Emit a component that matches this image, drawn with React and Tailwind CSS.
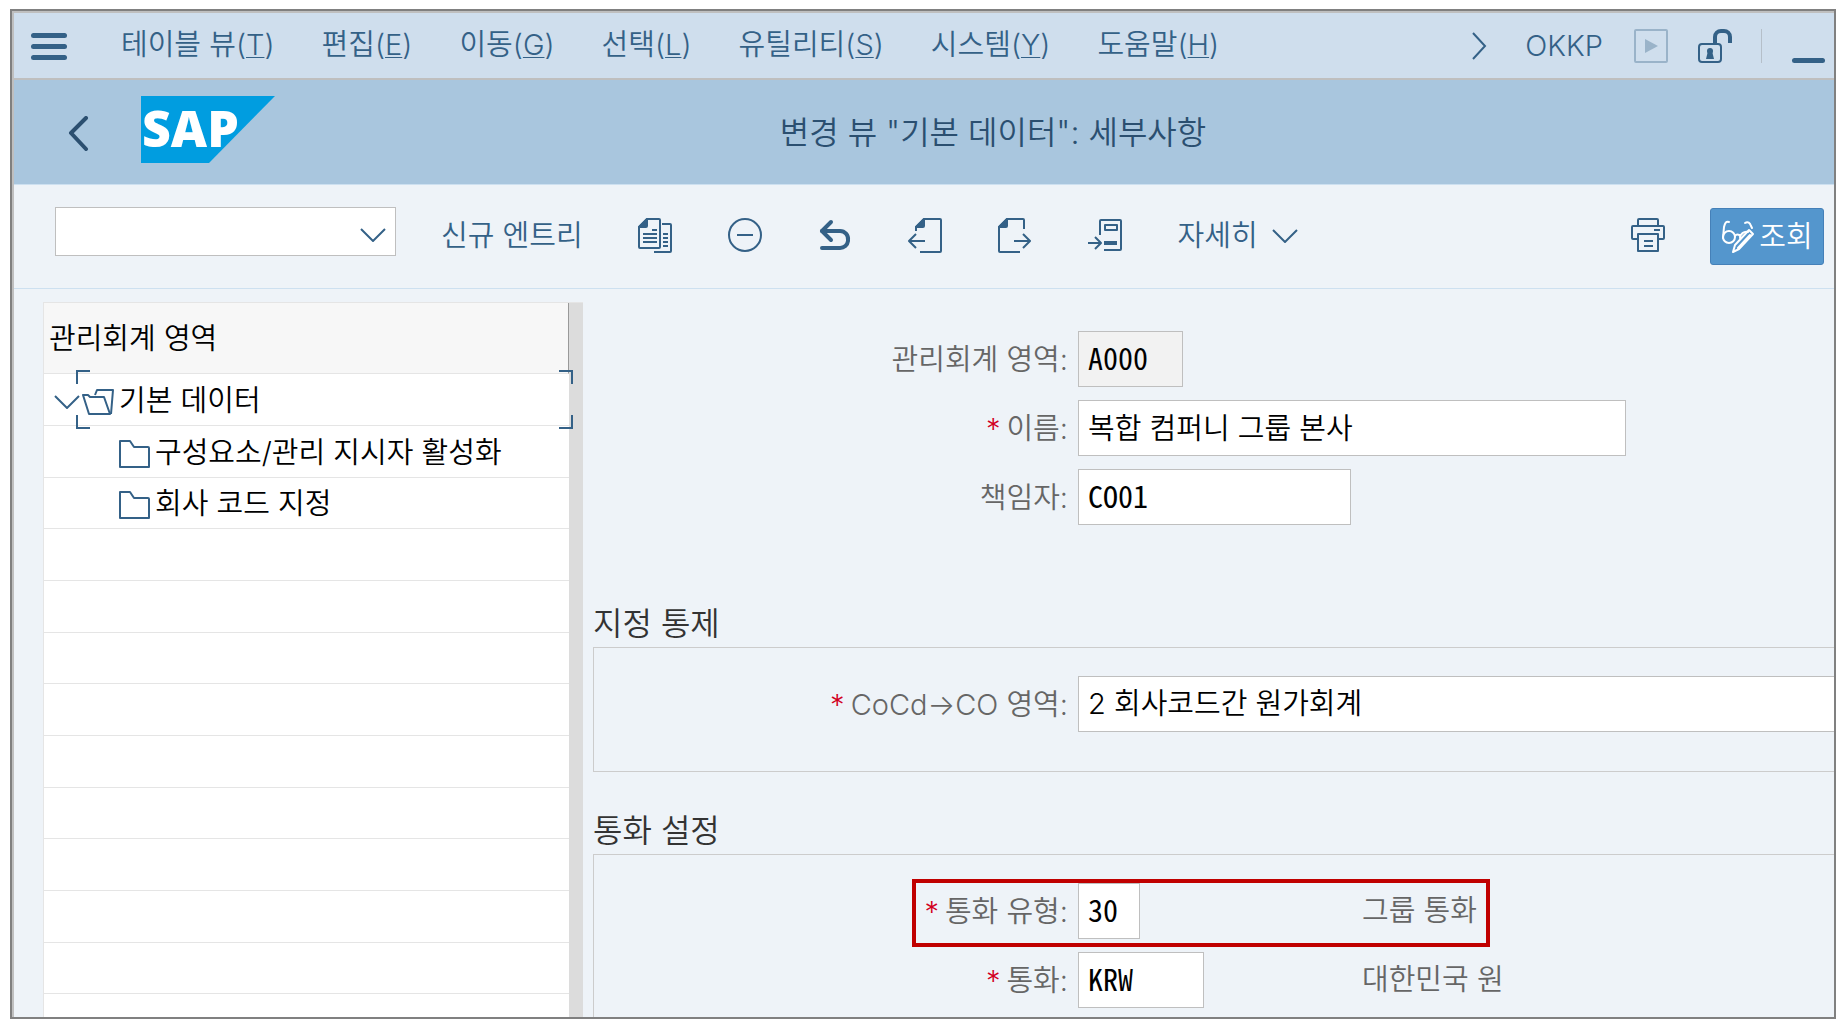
const menus = [
  { label: "테이블 뷰", key: "T" },
  { label: "편집", key: "E" },
  { label: "이동", key: "G" },
  { label: "선택", key: "L" },
  { label: "유틸리티", key: "S" },
  { label: "시스템", key: "Y" },
  { label: "도움말", key: "H" },
];

const emptyRows = Array.from({ length: 10 }, (_, i) => i);

function Icon({ children, ...props }) {
  return (
    <svg
      width="36"
      height="36"
      viewBox="0 0 36 36"
      fill="none"
      stroke="currentColor"
      strokeWidth="2"
      strokeLinejoin="round"
      aria-hidden="true"
      className="shrink-0"
      {...props}>
      {children}
    </svg>
  );
}

function ChevronDown() {
  return (
    <svg width="26" height="14" viewBox="0 0 26 14" fill="none" stroke="currentColor" strokeWidth="2" aria-hidden="true" className="shrink-0">
      <path d="M1 1l12 12L25 1" />
    </svg>
  );
}

function CopyIcon() {
  return (
    <Icon>
      <path d="M10 2h12a1 1 0 0 1 1 1v27a1 1 0 0 1-1 1H3a1 1 0 0 1-1-1V10z" />
      <path d="M10 2v7a1 1 0 0 1-1 1H2z" fill="currentColor" />
      <path d="M15 13h5M6 17h14M6 21h14M6 25h14M26 17h5M26 21h5M26 25h5M26 29h5" />
      <path d="M25 7h8a1 1 0 0 1 1 1v26a1 1 0 0 1-1 1H17" />
    </Icon>
  );
}

function MinusIcon() {
  return (
    <Icon>
      <circle cx="18" cy="18" r="16" />
      <path d="M10 18h16" />
    </Icon>
  );
}

function UndoIcon() {
  return (
    <Icon strokeWidth="4" strokeLinecap="round">
      <path d="M14 5L5 14l9 9" />
      <path d="M5 14h18a8 8 0 0 1 8 9v1a8 8 0 0 1-8 7H5" />
    </Icon>
  );
}

function PreviousIcon() {
  return (
    <Icon>
      <path d="M9 14v-4l8-8h16a1 1 0 0 1 1 1v31a1 1 0 0 1-1 1H13" />
      <path d="M17 2v7a1 1 0 0 1-1 1H9z" fill="currentColor" />
      <path d="M18 24H2M9 17l-7 7 7 7" />
    </Icon>
  );
}

function NextIcon() {
  return (
    <Icon>
      <path d="M27 12V3a1 1 0 0 0-1-1H10l-8 8v24a1 1 0 0 0 1 1h20" />
      <path d="M10 2v7a1 1 0 0 1-1 1H2z" fill="currentColor" />
      <path d="M17 24h16M26 17l7 7-7 7" />
    </Icon>
  );
}

function PositionIcon() {
  return (
    <Icon>
      <path d="M13 18V4a1 1 0 0 1 1-1h19a1 1 0 0 1 1 1v28a1 1 0 0 1-1 1H17" />
      <path d="M18 8h12v5H18z" />
      <path d="M17 26h13" strokeWidth="4" />
      <path d="M1 26h13M8 20l6 6-6 6" />
    </Icon>
  );
}

function PrinterIcon() {
  return (
    <Icon>
      <path d="M8 10V3a1 1 0 0 1 1-1h18a1 1 0 0 1 1 1v7" />
      <path d="M8 22H3a1 1 0 0 1-1-1V10a1 1 0 0 1 1-1h30a1 1 0 0 1 1 1v11a1 1 0 0 1-1 1h-5" />
      <path d="M8 17h20v17H8z" />
      <path d="M24 13h6M14 24h9M14 29h9" />
    </Icon>
  );
}

function GlassesPenIcon() {
  return (
    <Icon width="34" height="34" viewBox="0 0 34 34" strokeLinecap="round">
      <path d="M8 2C5 1 4 3 3 7L2 18" />
      <circle cx="8" cy="17" r="6" />
      <path d="M14 16c1-2 4-2 5 0M24 3c3-2 5 0 6 3l1 2M19 18c0-4 4-7 8-6" />
      <path d="M14 25L28 10l4 4-14 15-6 3zM17 28l12-13" />
    </Icon>
  );
}

function LockIcon() {
  return (
    <Icon>
      <rect x="2" y="16" width="22" height="18" rx="3" />
      <path d="M18 15V9a6 6 0 0 1 6-6h3a6 6 0 0 1 6 6v6" strokeWidth="4" />
      <circle cx="13" cy="23" r="3" fill="currentColor" stroke="none" />
      <path d="M11 23h4l2 8h-8z" fill="currentColor" stroke="none" />
    </Icon>
  );
}

function FolderIcon() {
  return (
    <svg width="33" height="30" viewBox="0 0 33 30" fill="none" stroke="currentColor" strokeWidth="2" strokeLinejoin="round" aria-hidden="true" className="shrink-0 text-[#346187]">
      <path d="M2 3h10l4 6h14a1 1 0 0 1 1 1v19H2z" />
    </svg>
  );
}

function OpenFolderIcon() {
  return (
    <svg width="33" height="30" viewBox="0 0 33 30" fill="none" stroke="currentColor" strokeWidth="2" strokeLinejoin="round" aria-hidden="true" className="shrink-0 text-[#346187]">
      <path d="M13 9l2-5h16l-2 24" />
      <path d="M1 9h5l2 2h14l6 17H7z" />
    </svg>
  );
}

function SapLogo() {
  return (
    <svg width="134" height="67" viewBox="0 0 134 67" role="img" aria-label="SAP" className="shrink-0 overflow-visible">
      <path d="M0 0h134L68 67H0z" fill="#009de0" />
      <text x="1" y="51" fill="#fff" className="font-['Open_Sans',sans-serif] text-[50px] font-extrabold">
        SAP
      </text>
    </svg>
  );
}

function MenuBar() {
  return (
    <nav className="flex h-[67px] shrink-0 items-center border-b-2 border-[#bfbfbf] bg-[#cfdeed] pl-[17px]">
      <button type="button" aria-label="메뉴" className="mr-[54px] flex flex-col gap-1.5 pt-0.5">
        <span className="h-[5px] w-9 rounded-full bg-[#346187]" />
        <span className="h-[5px] w-9 rounded-full bg-[#346187]" />
        <span className="h-[5px] w-9 rounded-full bg-[#346187]" />
      </button>
      <div className="flex gap-[47px] pb-0.5 whitespace-nowrap">
        {menus.map((m) => (
          <button key={m.key} type="button">
            {m.label}(<u className="decoration-1 underline-offset-2">{m.key}</u>)
          </button>
        ))}
      </div>
      <div className="ml-auto flex items-center pr-[9px]">
        <button type="button" aria-label="펼치기" className="mr-[38px]">
          <svg width="16" height="28" viewBox="0 0 16 28" fill="none" stroke="currentColor" strokeWidth="2">
            <path d="M2 1l12 13L2 27" />
          </svg>
        </button>
        <span className="mr-[30px]">OKKP</span>
        <button type="button" aria-label="실행" className="mr-7 text-[#9ab3c9]">
          <Icon>
            <rect x="2" y="2" width="32" height="32" rx="1" />
            <path d="M12 11l13 7-13 7z" fill="currentColor" stroke="none" />
          </Icon>
        </button>
        <button type="button" aria-label="잠금 해제">
          <LockIcon />
        </button>
        <span className="mr-[30px] ml-7 h-[34px] w-px bg-[#b5bfc9]" />
        <button type="button" aria-label="최소화" className="flex h-[34px] items-end">
          <span className="h-[5px] w-[33px] rounded-full bg-[#346187]" />
        </button>
      </div>
    </nav>
  );
}

function TitleBar() {
  return (
    <header className="flex h-[105px] shrink-0 items-center border-b border-[#cde0f0] bg-[#a9c6de] pb-1.5 text-[#2b4f70]">
      <button type="button" aria-label="뒤로" className="mr-[52px] ml-[54px] pt-2">
        <svg width="21" height="35" viewBox="0 0 21 35" fill="none" stroke="currentColor" strokeWidth="4" strokeLinecap="round" strokeLinejoin="round">
          <path d="M18 2L3 17l15 16" />
        </svg>
      </button>
      <SapLogo />
      <h1 className="flex-1 pt-2 pr-[123px] text-center text-[32px]">변경 뷰 "기본 데이터": 세부사항</h1>
    </header>
  );
}

function Toolbar() {
  return (
    <div className="flex h-[104px] shrink-0 items-center border-b border-[#cde0f0] pr-2.5 pb-1 pl-[41px] whitespace-nowrap">
      <div className="relative mr-[45px] pb-1.5">
        <select aria-label="명령" className="block h-[49px] w-[341px] appearance-none border border-[#bfbfbf] bg-white px-2">
          <option></option>
        </select>
        <span className="pointer-events-none absolute top-[21px] right-2.5">
          <ChevronDown />
        </span>
      </div>
      <button type="button" className="mr-[54px] pt-0.5">신규 엔트리</button>
      <div className="flex items-center gap-[54px]">
        <button type="button" aria-label="복사"><CopyIcon /></button>
        <button type="button" aria-label="삭제"><MinusIcon /></button>
        <button type="button" aria-label="실행 취소"><UndoIcon /></button>
        <button type="button" aria-label="이전 엔트리"><PreviousIcon /></button>
        <button type="button" aria-label="다음 엔트리"><NextIcon /></button>
        <button type="button" aria-label="위치 지정"><PositionIcon /></button>
      </div>
      <button type="button" className="ml-[55px] flex items-center gap-3.5 pt-0.5">
        자세히
        <ChevronDown />
      </button>
      <button type="button" aria-label="인쇄" className="mr-11 ml-auto">
        <PrinterIcon />
      </button>
      <div className="pt-1">
        <button type="button" className="flex h-[57px] w-[114px] items-center justify-center gap-1 rounded-[3px] border border-[#4580b8] bg-[#5496cd] text-white">
          <GlassesPenIcon />
          조회
        </button>
      </div>
    </div>
  );
}

function TreeRow({ children }) {
  return (
    <li className="relative flex h-[52px] shrink-0 items-center border-b border-[#e5e5e5] pt-0.5 whitespace-nowrap nth-[3n]:h-[51px]">
      {children}
    </li>
  );
}

function Tree() {
  return (
    <aside className="flex w-[540px] shrink-0 border-t border-l border-[#e5e5e5] bg-white text-black">
      <div className="flex min-w-0 flex-1 flex-col">
        <h2 className="flex h-[71px] shrink-0 items-center border-r border-b border-r-[#999] border-b-[#e5e5e5] bg-[#f7f7f7] pt-0.5 pl-[5px]">
          관리회계 영역
        </h2>
        <ul className="flex flex-col">
          <TreeRow>
            <button type="button" aria-label="접기" className="mt-0.5 ml-2.5 text-[#346187]">
              <ChevronDown />
            </button>
            <button type="button" className="ml-0.5 flex items-center gap-1">
              <OpenFolderIcon />
              기본 데이터
            </button>
            <span className="absolute -top-1 left-8 size-3.5 border-t-2 border-l-2 border-[#346187]" />
            <span className="absolute -bottom-1 left-8 size-3.5 border-b-2 border-l-2 border-[#346187]" />
            <span className="absolute -top-1 -right-1 size-3.5 border-t-2 border-r-2 border-[#346187]" />
            <span className="absolute -right-1 -bottom-1 size-3.5 border-r-2 border-b-2 border-[#346187]" />
          </TreeRow>
          <TreeRow>
            <button type="button" className="ml-[74px] flex items-center gap-1">
              <FolderIcon />
              구성요소/관리 지시자 활성화
            </button>
          </TreeRow>
          <TreeRow>
            <button type="button" className="ml-[74px] flex items-center gap-1">
              <FolderIcon />
              회사 코드 지정
            </button>
          </TreeRow>
          {emptyRows.map((i) => (
            <TreeRow key={i} />
          ))}
        </ul>
      </div>
      <div className="w-3.5 shrink-0 bg-[#dcdcdc]" />
    </aside>
  );
}

function Field({ id, label, required, note, highlight, children }) {
  return (
    <div className="relative flex items-center whitespace-nowrap">
      <label htmlFor={id} className="flex w-[474px] shrink-0 justify-end gap-1.5 pt-0.5">
        {required && <span className="text-[#d2001e]">*</span>}
        <span>{label}:</span>
      </label>
      <div className="ml-2.5 flex flex-1">{children}</div>
      {note && <span className="absolute left-[768px]">{note}</span>}
      {highlight && (
        <span className="pointer-events-none absolute -top-1 -bottom-2 left-[318px] w-[578px] border-4 border-[#c00000]" />
      )}
    </div>
  );
}

const fieldBox = "h-14 border border-[#bfbfbf] px-[9px] text-black outline-none";
const monoText = "pb-1 font-['Noto_Sans_Mono_CJK_KR','Liberation_Mono',monospace] text-[30px]";

function Details() {
  return (
    <main className="flex min-w-0 flex-1 flex-col pl-2.5 text-[#666]">
      <section className="flex flex-col gap-[13px] pt-[29px] pl-px">
        <Field id="area" label="관리회계 영역">
          <input id="area" readOnly defaultValue="A000" className={`${fieldBox} ${monoText} w-[105px] bg-[#f2f2f2]`} />
        </Field>
        <Field id="name" label="이름" required>
          <input id="name" defaultValue="복합 컴퍼니 그룹 본사" className={`${fieldBox} w-[548px] bg-white pb-1`} />
        </Field>
        <Field id="owner" label="책임자">
          <input id="owner" defaultValue="CO01" className={`${fieldBox} ${monoText} w-[273px] bg-white`} />
        </Field>
      </section>

      <section className="mt-[76px]">
        <h2 className="text-[32px] leading-[46px] text-[#333]">지정 통제</h2>
        <div className="border-y border-l border-[#ccc] pt-7 pb-[39px]">
          <Field id="cocd" label="CoCd→CO 영역" required>
            <select id="cocd" className={`${fieldBox} flex-1 appearance-none border-r-0 bg-white`}>
              <option>2 회사코드간 원가회계</option>
            </select>
          </Field>
        </div>
      </section>

      <section className="mt-9 flex flex-1 flex-col">
        <h2 className="text-[32px] leading-[46px] text-[#333]">통화 설정</h2>
        <div className="flex flex-1 flex-col gap-[13px] border-t border-l border-[#ccc] pt-7">
          <Field id="curtype" label="통화 유형" required note="그룹 통화" highlight>
            <input id="curtype" defaultValue="30" className={`${fieldBox} ${monoText} w-[62px] bg-white`} />
          </Field>
          <Field id="currency" label="통화" required note="대한민국 원">
            <input id="currency" defaultValue="KRW" className={`${fieldBox} ${monoText} w-[126px] bg-white`} />
          </Field>
        </div>
      </section>
    </main>
  );
}

function App() {
  return (
    <div className="h-screen bg-white pt-[9px] pr-0.5 pb-0.5 pl-2.5">
      <div className="h-full border-2 border-[#808080]">
        <div className="flex h-full flex-col overflow-hidden border-t-2 border-l-2 border-[#bfbfbf] bg-[#eef3f8] font-['Inter','Noto_Sans_CJK_KR_DemiLight','Noto_Sans_CJK_KR',sans-serif] text-[29px] leading-10 font-light text-[#346187]">
          <MenuBar />
          <TitleBar />
          <Toolbar />
          <div className="flex min-h-0 flex-1 overflow-hidden pt-[13px] pl-[29px]">
            <Tree />
            <Details />
          </div>
        </div>
      </div>
    </div>
  );
}

export default App;
